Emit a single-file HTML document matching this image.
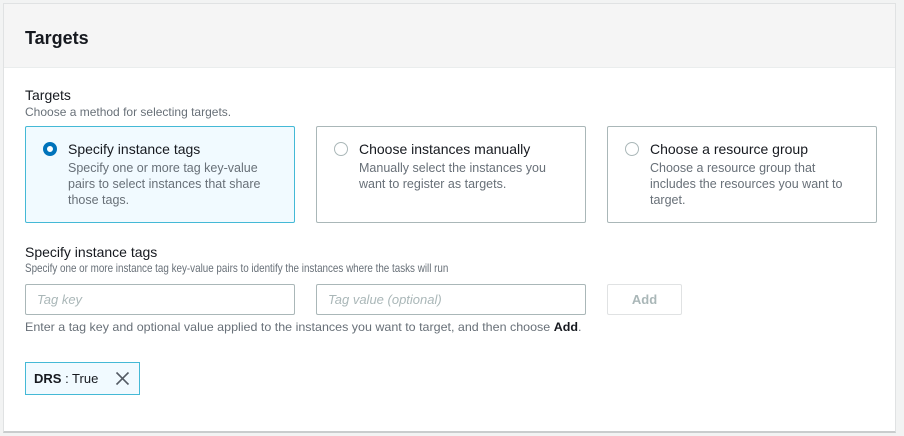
<!DOCTYPE html>
<html><head><meta charset="utf-8"><style>
*{margin:0;padding:0;box-sizing:border-box}
body{width:904px;height:436px;background:#f2f3f3;font-family:"Liberation Sans",sans-serif;color:#16191f;position:relative;overflow:hidden}
.panel{position:absolute;left:3px;top:3px;width:893px;height:430px;background:#fff;border:1px solid #e0e2e3;border-bottom:2px solid #c9cccd}
.hdr{position:absolute;left:0;top:0;right:0;height:64px;background:#f5f5f5;border-bottom:1px solid #eaeded}
.a{position:absolute;white-space:nowrap}
.card{position:absolute;top:126px;width:270px;height:97px;border:1px solid #aab7b8;border-radius:2px;background:#fff}
.card.sel{border-color:#44b9d6;background:#f1faff}
.rad{position:absolute;left:17px;top:15px;width:14px;height:14px;border-radius:50%;border:1px solid #aab7b8;background:#fff}
.sel .rad{border:4px solid #0073bb}
.ct{position:absolute;left:42px;top:14px;font-size:14px;color:#16191f}
.cd{position:absolute;left:42px;top:33px;font-size:12.5px;line-height:16px;color:#687078;white-space:normal;width:205px}
.inp{position:absolute;top:284px;height:31px;border:1px solid #aab7b8;border-radius:2px;font-size:13px;font-style:italic;color:#aab7b8;padding:7px 11px}
.g{color:#687078;font-size:12px}
</style></head><body>
<div class="panel">
<div class="hdr"></div>
<div class="a" style="left:21px;top:24px;font-size:18px;font-weight:bold">Targets</div>
</div>
<div class="a" style="left:25px;top:87px;font-size:14px">Targets</div>
<div class="a g" style="left:25px;top:105px">Choose a method for selecting targets.</div>
<div class="card sel" style="left:25px"><div class="rad"></div><div class="a ct">Specify instance tags</div><div class="a cd">Specify one or more tag key-value pairs to select instances that share those tags.</div></div>
<div class="card" style="left:316px"><div class="rad"></div><div class="a ct">Choose instances manually</div><div class="a cd">Manually select the instances you want to register as targets.</div></div>
<div class="card" style="left:607px"><div class="rad"></div><div class="a ct">Choose a resource group</div><div class="a cd">Choose a resource group that includes the resources you want to target.</div></div>
<div class="a" style="left:25px;top:244px;font-size:14px">Specify instance tags</div>
<div class="a g" style="left:25px;top:261px;transform:scaleX(0.82);transform-origin:left">Specify one or more instance tag key-value pairs to identify the instances where the tasks will run</div>
<div class="inp" style="left:25px;width:270px">Tag key</div>
<div class="inp" style="left:316px;width:270px">Tag value (optional)</div>
<div class="a" style="left:607px;top:284px;width:75px;height:31px;border:1px solid #e0e2e3;border-radius:2px;color:#aab7b8;font-size:13px;font-weight:bold;text-align:center;line-height:29px">Add</div>
<div class="a g" style="left:25px;top:320px;transform:scaleX(1.04);transform-origin:left">Enter a tag key and optional value applied to the instances you want to target, and then choose <b style="color:#16191f">Add</b>.</div>
<div class="a" style="left:25px;top:362px;width:115px;height:33px;border:1px solid #44b9d6;background:#f1faff;font-size:13px;padding:8px 8px;color:#16191f"><b>DRS</b> : True</div>
<svg class="a" style="left:115px;top:371px" width="15" height="15" viewBox="0 0 15 15"><path d="M1.5 1.5L13.5 13.5M13.5 1.5L1.5 13.5" stroke="#545b64" stroke-width="1.6"/></svg>
</body></html>
